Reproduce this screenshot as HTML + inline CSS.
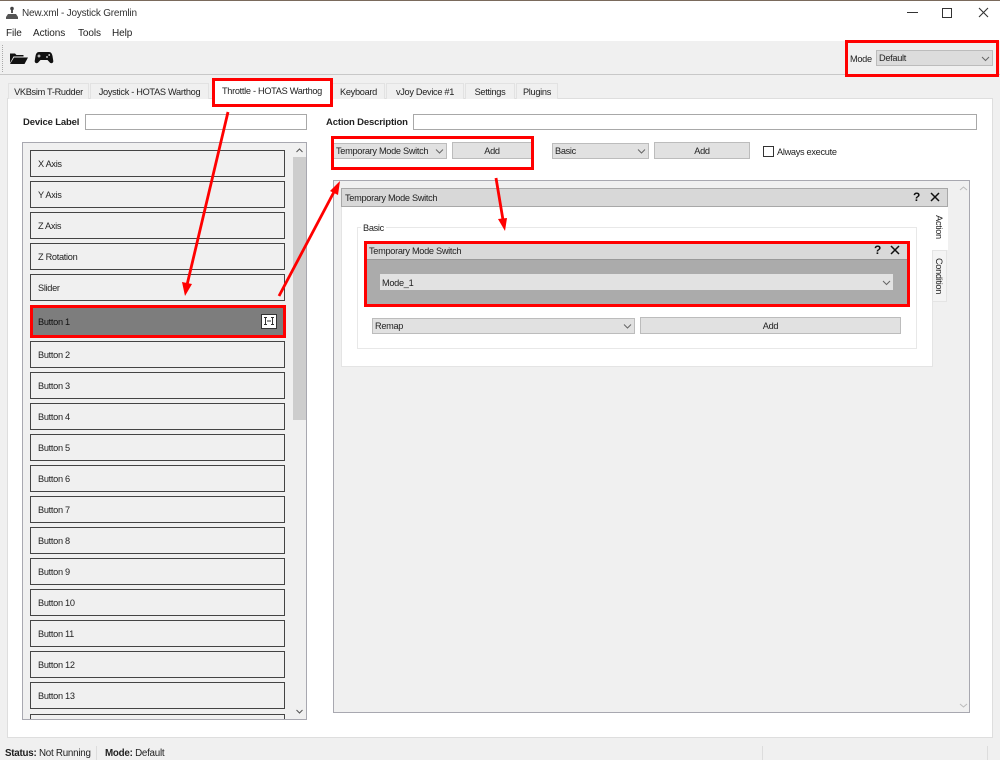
<!DOCTYPE html>
<html><head><meta charset="utf-8"><title>New.xml - Joystick Gremlin</title>
<style>
html,body{margin:0;padding:0;background:#fff}
#r{position:relative;width:1000px;height:760px;overflow:hidden;background:#f0f0f0;font:9.2px "Liberation Sans",sans-serif;letter-spacing:-.3px;color:#222}
#r div,#r span.a{position:absolute;box-sizing:border-box}
.t{white-space:nowrap;line-height:12px}
.tab{background:#f0f0f0;border:1px solid #e2e2e2;border-bottom:0;top:83px;height:16px;text-align:center;line-height:16px;white-space:nowrap}
.it{left:30px;width:255px;height:27px;background:#f0f0f0;border:1px solid #444;padding-left:7px;line-height:26px}
.cb{background:#e1e1e1;border:1px solid #bcbcbc;line-height:15px;padding-left:2px;white-space:nowrap}
.btn{background:#e1e1e1;border:1px solid #bcbcbc;line-height:16px;text-align:center}
.inp{background:#fff;border:1px solid #a8a8a8}
.red{border:3px solid #f00}
svg{position:absolute;overflow:visible}
</style></head><body><div id="r">
<div style="left:0;top:0;width:1000px;height:41px;background:#fff"></div>
<div style="left:0;top:0;width:1000px;height:1px;background:#7a6a5c"></div>
<!-- title -->
<svg style="left:5px;top:6px" width="14" height="14" viewBox="0 0 14 14"><path d="M6 1h2v6H6z" fill="#555"/><circle cx="7" cy="2.500" r="1.800" fill="#444"/><path d="M3 8h8l2 3v2H1v-2z" fill="#555"/></svg>
<div class="t" style="left:22px;top:8px;font-size:10px;letter-spacing:-.2px;color:#333">New.xml - Joystick Gremlin</div>
<svg style="left:905px;top:5px" width="90" height="14" fill="none" stroke="#333"><path d="M2 7.500h11"/><rect x="37.500" y="3.500" width="9" height="9"/><path d="M74 3l9 9M83 3l-9 9" stroke-width="1.100"/></svg>
<div class="t" style="left:6px;top:28px;font-size:10px;letter-spacing:-.1px">File</div>
<div class="t" style="left:33px;top:28px;font-size:10px;letter-spacing:-.1px">Actions</div>
<div class="t" style="left:78px;top:28px;font-size:10px;letter-spacing:-.1px">Tools</div>
<div class="t" style="left:112px;top:28px;font-size:10px;letter-spacing:-.1px">Help</div>
<!-- toolbar -->
<div style="left:0;top:41px;width:1000px;height:34px;background:#f0f0f0;border-bottom:1px solid #c8c8c8"></div>
<div style="left:2px;top:45px;width:2px;height:27px;border-left:1px dotted #aaa"></div>
<svg style="left:9px;top:51px" width="20" height="14" viewBox="0 0 20 14"><path d="M1 2.500h5l1.500 1.500h7v1.500H4.500L1 12z" fill="#111"/><path d="M5 6.500h14L15.500 13H1z" fill="#111"/></svg>
<svg style="left:34px;top:51px" width="20" height="14" viewBox="0 0 20 14"><path d="M5 1h10c2 0 3 1.500 3.500 4l.8 5c.2 2-2 3-3.500 1.500L13.500 9h-7l-2.300 2.500C2.700 13 .5 12 .7 10l.8-5C2 2.500 3 1 5 1z" fill="#111"/><path d="M5 3.500v3M3.500 5h3" stroke="#eee"/><circle cx="13" cy="6" r=".9" fill="#eee"/><circle cx="15.200" cy="4" r=".9" fill="#eee"/></svg>
<div class="t" style="left:850px;top:53px">Mode</div>
<div class="cb" style="left:876px;top:50px;width:117px;height:16px;background:#dcdcdc">Default</div>
<!-- tabs -->
<div style="left:7px;top:98px;width:986px;height:640px;background:#fff;border:1px solid #dedede"></div>
<div class="tab" style="left:8px;width:81px">VKBsim T-Rudder</div>
<div class="tab" style="left:90px;width:119px">Joystick - HOTAS Warthog</div>
<div class="tab" style="left:214px;width:116px;background:#fff;top:81px;height:18px;border:0;line-height:20px">Throttle - HOTAS Warthog</div>
<div class="tab" style="left:332px;width:53px">Keyboard</div>
<div class="tab" style="left:386px;width:78px">vJoy Device #1</div>
<div class="tab" style="left:465px;width:50px">Settings</div>
<div class="tab" style="left:516px;width:42px">Plugins</div>
<!-- device -->
<div class="t" style="left:23px;top:117px;font-weight:bold;font-size:9.500px;letter-spacing:-.15px">Device Label</div>
<div class="inp" style="left:85px;top:114px;width:222px;height:16px"></div>
<div class="t" style="left:326px;top:117px;font-weight:bold;font-size:9.500px;letter-spacing:-.15px">Action Description</div>
<div class="inp" style="left:413px;top:114px;width:564px;height:16px"></div>
<!-- list -->
<div style="left:22px;top:142px;width:285px;height:578px;background:#f0f0f0;border:1px solid #a8a8b0;overflow:hidden"></div>
<div style="left:293px;top:157px;width:13px;height:263px;background:#cdcdcd"></div>
<svg style="left:293px;top:143px" width="13" height="576" fill="none" stroke="#555"><path d="M3.500 9l3-3 3 3M3.500 567l3 3 3-3"/></svg>
<div class="it" style="top:150px">X Axis</div>
<div class="it" style="top:181px">Y Axis</div>
<div class="it" style="top:212px">Z Axis</div>
<div class="it" style="top:243px">Z Rotation</div>
<div class="it" style="top:274px">Slider</div>
<div class="it" style="top:305px;height:33px;background:#7d7d7d;border:0;padding-left:8px;line-height:34px;color:#111">Button 1</div>
<div style="left:261px;top:314px;width:16px;height:15px;background:#fff;border:1px solid #333"></div>
<svg style="left:263px;top:316px" width="12" height="11" fill="none" stroke="#333"><path d="M1 1.500h3M1 8.500h3M2.500 1.500v7M8 1.500h3M8 8.500h3M9.500 1.500v7M4 5h4"/></svg>
<div class="it" style="top:341px">Button 2</div>
<div class="it" style="top:372px">Button 3</div>
<div class="it" style="top:403px">Button 4</div>
<div class="it" style="top:434px">Button 5</div>
<div class="it" style="top:465px">Button 6</div>
<div class="it" style="top:496px">Button 7</div>
<div class="it" style="top:527px">Button 8</div>
<div class="it" style="top:558px">Button 9</div>
<div class="it" style="top:589px">Button 10</div>
<div class="it" style="top:620px">Button 11</div>
<div class="it" style="top:651px">Button 12</div>
<div class="it" style="top:682px">Button 13</div>
<div style="left:30px;top:714px;width:255px;height:5px;border:1px solid #444;border-bottom:0"></div>
<!-- action row -->
<div class="cb" style="left:333px;top:143px;width:114px;height:16px">Temporary Mode Switch</div>
<div class="btn" style="left:452px;top:142px;width:80px;height:17px">Add</div>
<div class="cb" style="left:552px;top:143px;width:97px;height:16px">Basic</div>
<div class="btn" style="left:654px;top:142px;width:96px;height:17px">Add</div>
<div style="left:763px;top:146px;width:11px;height:11px;background:#fff;border:1px solid #333"></div>
<div class="t" style="left:777px;top:146px">Always execute</div>
<!-- scroll area -->
<div style="left:333px;top:180px;width:637px;height:533px;background:#f0f0f0;border:1px solid #a8a8b0"></div>
<svg style="left:957px;top:181px" width="13" height="531" fill="none" stroke="#bbb"><path d="M3 9l3.500-3 3.500 3M3 523l3.500 3 3.500-3"/></svg>
<div style="left:341px;top:206px;width:592px;height:161px;background:#fff;border:1px solid #e4e4e4;border-top:0"></div>
<div class="t" style="left:341px;top:188px;width:607px;height:19px;background:#d8d8d8;border:1px solid #a8a8a8;padding-left:3px;line-height:18px">Temporary Mode Switch</div>
<div style="left:932px;top:207px;width:16px;height:43px;background:#fff"></div>
<div style="left:933px;top:250px;width:14px;height:52px;background:#f4f4f4;border:1px solid #e4e4e4;border-left:0"></div>
<div class="t" style="left:919px;top:221px;width:40px;text-align:center;transform:rotate(90deg)">Action</div>
<div class="t" style="left:914px;top:270px;width:50px;text-align:center;transform:rotate(90deg)">Condition</div>
<div class="t" style="left:913px;top:191px;font-size:12px;font-weight:bold;color:#111">?</div>
<svg style="left:930px;top:192px" width="10" height="10" stroke="#111" stroke-width="1.500"><path d="M1 1l8 8M9 1l-8 8"/></svg>
<!-- group -->
<div style="left:357px;top:227px;width:560px;height:122px;border:1px solid #e8e8e8"></div>
<div class="t" style="left:361px;top:222px;background:#fff;padding:0 2px">Basic</div>
<div style="left:366px;top:243px;width:542px;height:16px;background:#d9d9d9;padding-left:3px;line-height:16px">Temporary Mode Switch</div>
<div style="left:366px;top:259px;width:542px;height:46px;background:#ababab;border-top:1px solid #999"></div>
<div class="t" style="left:874px;top:244px;font-size:12px;font-weight:bold;color:#111">?</div>
<svg style="left:890px;top:245px" width="10" height="10" stroke="#111" stroke-width="1.500"><path d="M1 1l8 8M9 1l-8 8"/></svg>
<div style="left:380px;top:274px;width:513px;height:16px;background:#e2e2e2;padding-left:2px;line-height:18px">Mode_1</div>
<div class="cb" style="left:372px;top:318px;width:263px;height:16px">Remap</div>
<div class="btn" style="left:640px;top:317px;width:261px;height:17px">Add</div>
<!-- chevrons -->
<svg style="left:0;top:0" width="1000" height="760" fill="none" stroke="#666"><path d="M982 57l3.500 3.500 3.500-3.500M436 149.500l3.500 3.500 3.500-3.500M638 149.500l3.500 3.500 3.500-3.500M883 281l3.500 3.500 3.500-3.500M624 324.500l3.500 3.500 3.500-3.500"/></svg>
<!-- status -->
<div class="t" style="left:5px;top:748px;font-size:9.800px;letter-spacing:-.25px"><b>Status:</b> Not Running</div>
<div style="left:96px;top:746px;width:1px;height:14px;background:#ddd"></div>
<div class="t" style="left:105px;top:748px;font-size:9.800px;letter-spacing:-.25px"><b>Mode:</b> Default</div>
<div style="left:762px;top:746px;width:1px;height:14px;background:#ddd"></div>
<div style="left:987px;top:746px;width:1px;height:14px;background:#ddd"></div>
<!-- red boxes -->
<div class="red" style="left:845px;top:40px;width:154px;height:37px"></div>
<div class="red" style="left:212px;top:78px;width:121px;height:29px"></div>
<div class="red" style="left:331px;top:136px;width:203px;height:34px"></div>
<div class="red" style="left:30px;top:305px;width:256px;height:33px"></div>
<div class="red" style="left:364px;top:241px;width:546px;height:66px"></div>
<!-- arrows -->
<svg style="left:0;top:0" width="1000" height="760"><g stroke="#f00" stroke-width="2.800" fill="none"><path d="M228 112L187 285"/><path d="M279 296L335 190"/><path d="M496 178L503 220"/></g><g fill="#f00"><path d="M185 296l-3-14 10 2z"/><path d="M340 181l-2 14-8-4z"/><path d="M505 231l-7-12 9-1z"/></g></svg>
</div></body></html>
